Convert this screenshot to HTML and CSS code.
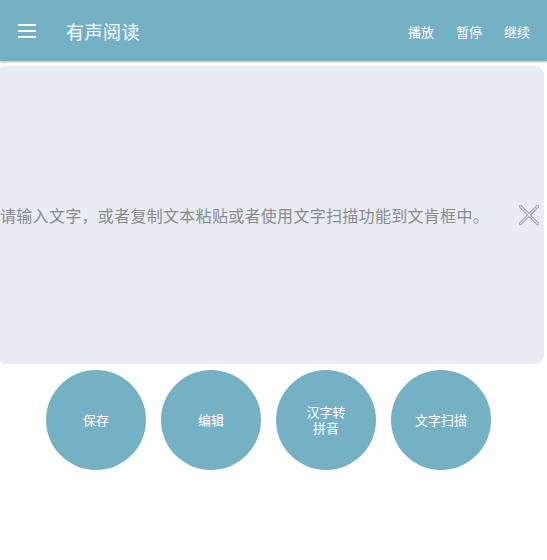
FILE: index.html
```
<!DOCTYPE html>
<html lang="zh">
<head>
<meta charset="utf-8">
<link rel="stylesheet" href="styles.css">
</head>
<body>
<header class="bar">
  <svg class="menu" width="18" height="14" viewBox="0 0 18 14"><rect x="0" y="0" width="18" height="2" fill="#fff"/><rect x="0" y="6" width="18" height="2" fill="#fff"/><rect x="0" y="12" width="18" height="2" fill="#fff"/></svg>
  <div class="title">有声阅读</div>
  <nav class="actions"><span>播放</span><span>暂停</span><span>继续</span></nav>
</header>
<main>
  <section class="panel">
    <div class="row">
      <div class="hint">请输入文字，或者复制文本粘贴或者使用文字扫描功能到文肯框中。</div>
      <svg class="close" width="20" height="20" viewBox="0 0 20 20"><path d="M1 1 L19 19 M19 1 L1 19" stroke="#8a8a8a" stroke-width="3" stroke-linecap="round"/><path d="M1 1 L19 19 M19 1 L1 19" stroke="#e8edf4" stroke-width="1.2" stroke-linecap="round"/></svg>
    </div>
  </section>
  <div class="buttons">
    <div class="circle">保存</div>
    <div class="circle">编辑</div>
    <div class="circle"><div class="two"><div>汉字转</div><div>拼音</div></div></div>
    <div class="circle">文字扫描</div>
  </div>
</main>
</body>
</html>
```
FILE: styles.css
```
* { box-sizing: border-box; }
html, body { margin: 0; padding: 0; background: #fff; }
body {
  width: 547px;
  height: 560px;
  overflow: hidden;
  font-family: "Noto Sans CJK SC", "Noto Sans", sans-serif;
}
.bar {
  height: 61px;
  background: #75b1c5;
  display: flex;
  align-items: center;
  padding: 0 17px 0 18px;
  box-shadow: 0 1px 2px rgba(0,0,0,0.3);
  position: relative;
}
.menu { display: block; margin-top: 1px; }
.title {
  color: #fff;
  font-size: 18px;
  margin-left: 30px;
  letter-spacing: 0.5px;
}
.actions {
  margin-left: auto;
  display: flex;
  gap: 22px;
  color: #fff;
  font-size: 13px;
  margin-top: 1px;
}
.panel {
  margin-top: 5px;
  width: 544px;
  height: 298px;
  background: #e8edf4;
  border-radius: 4px 9px 9px 4px;
  overflow: hidden;
  display: flex;
  align-items: center;
}
.row {
  width: 100%;
  display: flex;
  justify-content: flex-end;
  align-items: center;
  padding-right: 5px;
}
.hint {
  white-space: nowrap;
  flex: none;
  font-family: "Noto Sans CJK TC", "Noto Sans CJK SC", sans-serif;
  font-size: 16px;
  letter-spacing: 0.3px;
  color: #8a8a8a;
  line-height: 20px;
}
.close { flex: none; margin-left: 30px; }
.buttons {
  display: flex;
  gap: 15px;
  margin-top: 6px;
  padding-left: 46px;
}
.circle {
  width: 100px;
  height: 100px;
  border-radius: 50%;
  background: #75b1c5;
  color: #fff;
  font-size: 13px;
  line-height: 16px;
  display: flex;
  align-items: center;
  justify-content: center;
  text-align: center;
}
.two { line-height: 16px; }
```
